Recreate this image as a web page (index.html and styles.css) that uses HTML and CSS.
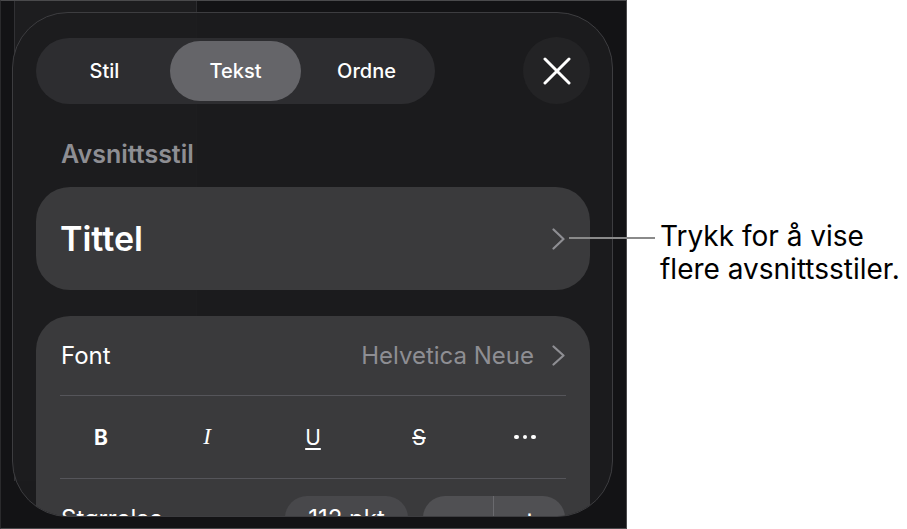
FILE: index.html
```html
<!DOCTYPE html>
<html>
    <head>
        <title>Tekst</title>
        <link rel="stylesheet" href="styles.css">
    </head>
    <body>
        <div class="page">
            <div class="device">
                <div class="backdrop"></div>
                <div class="sheet">
                    <div class="sheet_head">
                        <div class="segments">
                            <span class="segment">Stil</span>
                            <span class="segment active">Tekst</span>
                            <span class="segment">Ordne</span>
                        </div>
                        <button class="close">
                            <svg width="28" height="28" viewBox="0 0 28 28">
                                <path d="M2 2 L26 26 M26 2 L2 26" stroke="#fff" stroke-width="3" stroke-linecap="round" fill="none"/>
                            </svg>
                        </button>
                    </div>

                    <div class="section_label">Avsnittsstil</div>
                    <div class="style_card">
                        <span class="style_name">Tittel</span>
                        <svg class="chevron" width="13" height="22" viewBox="0 0 13 22">
                            <polyline points="1.5,1.5 11.5,11 1.5,20.5" stroke="#8e8e93" stroke-width="2.2" fill="none" stroke-linecap="round" stroke-linejoin="round"/>
                        </svg>
                    </div>

                    <div class="format_card">
                        <div class="font_row">
                            <span>Font</span>
                            <span class="font_value">Helvetica Neue
                                <svg class="chevron" width="13" height="21" viewBox="0 0 13 21">
                                    <polyline points="1.5,1.5 11.5,10.5 1.5,19.5" stroke="#8e8e93" stroke-width="2.2" fill="none" stroke-linecap="round" stroke-linejoin="round"/>
                                </svg>
                            </span>
                        </div>
                        <div class="divider"></div>
                        <div class="format_row">
                            <span class="fmt fmt_bold">B</span>
                            <span class="fmt fmt_italic">I</span>
                            <span class="fmt fmt_under">U</span>
                            <span class="fmt fmt_strike">S</span>
                            <span class="fmt fmt_more"><i></i><i></i><i></i></span>
                        </div>
                        <div class="divider"></div>
                        <div class="size_row">
                            <span class="size_label">Størrelse</span>
                            <span class="size_value">112 pkt</span>
                            <span class="stepper">
                                <span class="step">−</span>
                                <span class="step">+</span>
                            </span>
                        </div>
                    </div>
                </div>
            </div>

            <!-- note pointing at the style chevron -->
            <div class="callout">
                <div class="callout_line"></div>
                <p class="callout_text">Trykk for å vise<br>flere avsnittsstiler.</p>
            </div>
        </div>
    </body>
</html>
```

FILE: styles.css
```css
body{
    margin: 0;
    background: #fff;
    font-family: "Inter", "Liberation Sans", sans-serif;
}
.page{
    position: relative;
    width: 907px;
    height: 529px;
}
.device{
    position: relative;
    width: 627px;
    height: 529px;
    box-sizing: border-box;
    border: 1px solid #4a4a4c;
    border-left-color: #2a2a2c;
    background: #131315;
    overflow: hidden;
}
.backdrop{
    position: absolute;
    left: 13px;
    top: 0;
    width: 181px;
    height: 480px;
    background: #1d1d1f;
    border-left: 1px solid #313134;
    border-right: 1px solid #2c2c2f;
}
.sheet{
    position: absolute;
    left: 11px;
    top: 11px;
    width: 601px;
    height: 505px;
    box-sizing: border-box;
    padding: 24px 22px 0 23px;
    border: 1px solid #3d3d40;
    border-radius: 56px;
    background: rgba(28, 28, 30, 0.93);
    overflow: hidden;
}

/* header: segmented control + close */
.sheet_head{
    display: flex;
    justify-content: space-between;
    align-items: center;
    height: 67px;
}
.segments{
    display: grid;
    grid-template-columns: 1fr 1fr 1fr;
    width: 399px;
    height: 66px;
    box-sizing: border-box;
    padding: 3px;
    border-radius: 33px;
    background: #2d2d30;
}
.segment{
    display: flex;
    align-items: center;
    justify-content: center;
    color: #fff;
    font-size: 20px;
    font-weight: 500;
    border-radius: 31px;
}
.segment.active{
    background: #656569;
}
.close{
    display: flex;
    align-items: center;
    justify-content: center;
    width: 67px;
    height: 67px;
    padding: 0;
    border: none;
    border-radius: 50%;
    background: #232325;
}

.section_label{
    margin-top: 36px;
    padding-left: 25px;
    font-size: 25px;
    font-weight: 600;
    line-height: 29px;
    color: #8e8e93;
}
.style_card{
    display: flex;
    align-items: center;
    justify-content: space-between;
    height: 103px;
    margin-top: 18px;
    padding: 0 25px 0 24px;
    border-radius: 34px;
    background: #3a3a3c;
}
.style_name{
    color: #fff;
    font-size: 34px;
    font-weight: 600;
}

.format_card{
    margin-top: 26px;
    height: 300px;
    border-radius: 34px;
    background: #3a3a3c;
}
.font_row{
    display: flex;
    align-items: center;
    justify-content: space-between;
    height: 79px;
    padding: 0 25px;
    color: #fff;
    font-size: 24px;
}
.font_value{
    display: flex;
    align-items: center;
    gap: 18px;
    color: #8e8e93;
}
.divider{
    height: 1px;
    margin: 0 24px;
    background: #55555a;
}
.format_row{
    display: grid;
    grid-template-columns: repeat(5, 1fr);
    height: 82px;
    padding: 0 12px;
}
.fmt{
    display: flex;
    align-items: center;
    justify-content: center;
    color: #fff;
    font-size: 21px;
}
.fmt_bold{
    font-weight: 700;
}
.fmt_italic{
    font-family: "Liberation Serif", serif;
    font-style: italic;
    font-size: 23px;
}
.fmt_under{
    text-decoration: underline;
    text-decoration-thickness: 1.5px;
    text-underline-offset: 3px;
}
.fmt_strike{
    text-decoration: line-through;
    text-decoration-thickness: 1.5px;
}
.fmt_more{
    gap: 4px;
}
.fmt_more i{
    width: 4.5px;
    height: 4.5px;
    border-radius: 50%;
    background: #fff;
}
.size_row{
    display: flex;
    align-items: center;
    gap: 15px;
    height: 78px;
    padding: 0 25px;
    color: #fff;
    font-size: 24px;
}
.size_label{
    flex: 1;
}
.size_value{
    display: flex;
    align-items: center;
    justify-content: center;
    width: 123px;
    height: 44px;
    border-radius: 22px;
    background: #48484b;
}
.stepper{
    display: grid;
    grid-template-columns: 1fr 1fr;
    width: 142px;
    height: 44px;
    border-radius: 22px;
    background: #505053;
}
.step{
    display: flex;
    align-items: center;
    justify-content: center;
    font-size: 28px;
}
.step:first-child{
    border-right: 1px solid #6a6a6e;
}

/* annotation */
.callout{
    position: absolute;
    left: 569px;
    top: 220px;
    display: flex;
    align-items: flex-start;
}
.callout_line{
    width: 86px;
    height: 2px;
    margin-top: 17px;
    background: #8a8a8a;
}
.callout_text{
    margin: 0 0 0 5px;
    color: #000;
    font-size: 28px;
    line-height: 33px;
}
```
